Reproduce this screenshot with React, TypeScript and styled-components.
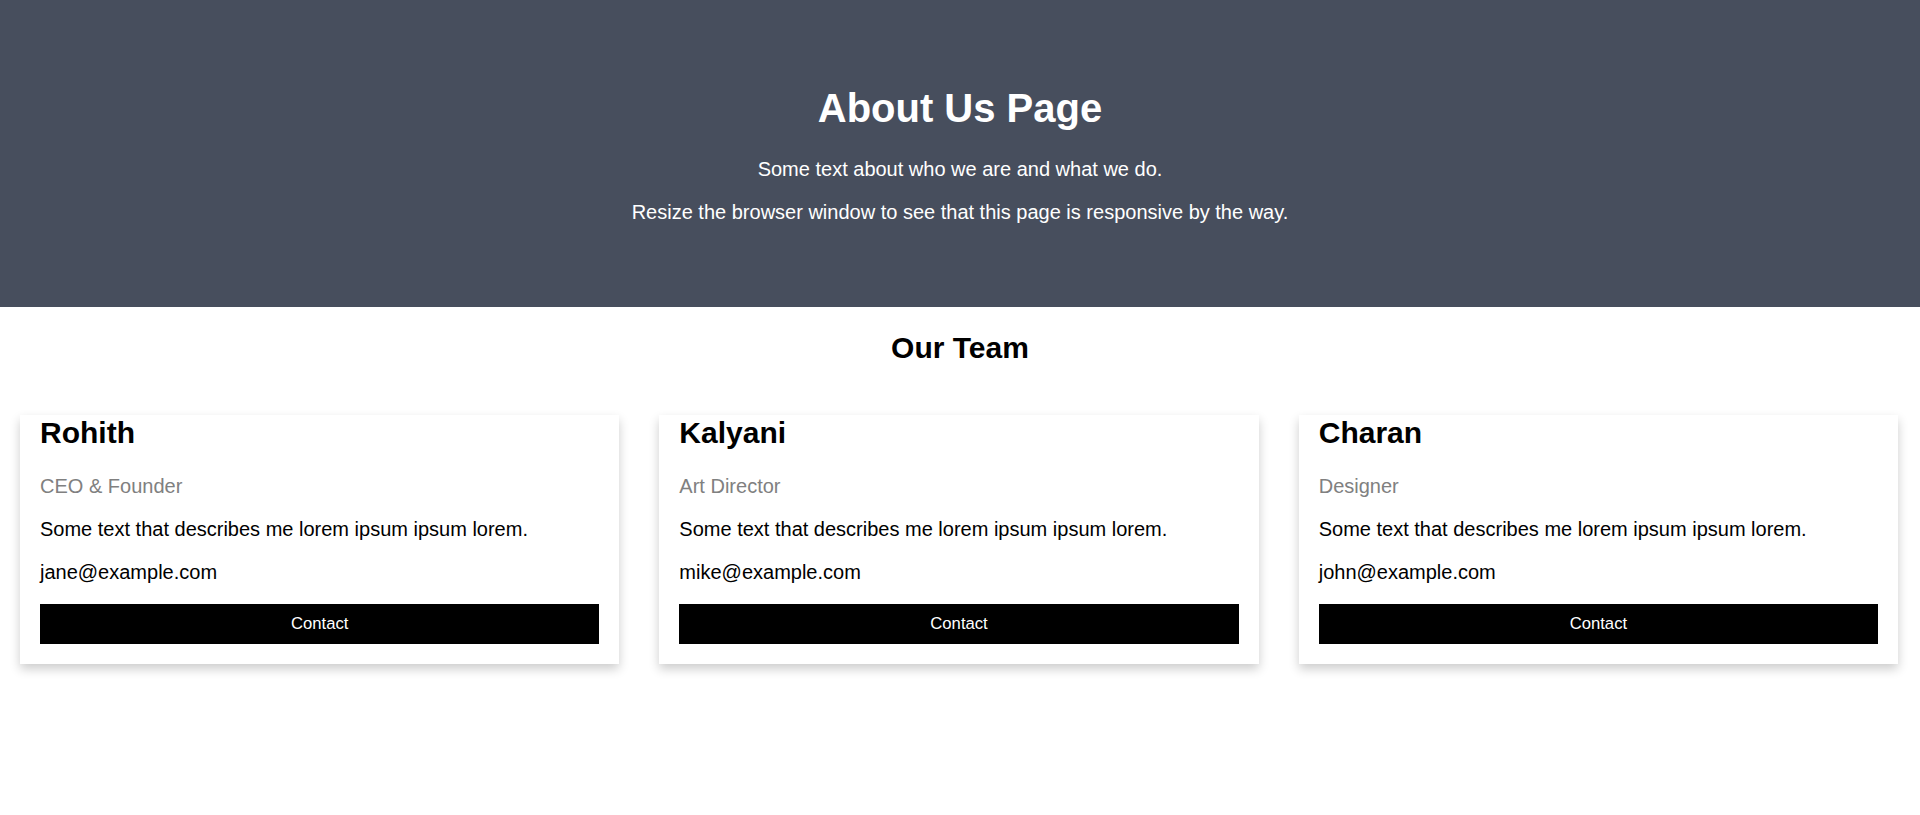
import styled, { createGlobalStyle } from 'styled-components';

// Types
interface Member {
  name: string;
  title: string;
  email: string;
}

const GlobalStyle = createGlobalStyle`
  html, body {
    margin: 0;
    padding: 0;
    background: #fff;
  }

  body {
    font-family: "Liberation Sans", Arial, sans-serif;
    color: #000;
  }

  * {
    box-sizing: border-box;
  }
`;

// Styled Components
const AboutSection = styled.header`
  padding: 85px 62px 83px;
  text-align: center;
  background-color: #474e5d;
  color: #fff;
`;

const PageTitle = styled.h1`
  margin: 0 0 27px;
  font-size: 40px;
  line-height: 46px;
  font-weight: 700;
`;

const Lead = styled.p`
  margin: 0 0 20px;
  font-size: 20px;
  line-height: 23px;

  &:last-child {
    margin-bottom: 0;
  }
`;

const SectionTitle = styled.h2`
  margin: 24px 0 50px;
  text-align: center;
  font-size: 30px;
  line-height: 34px;
  font-weight: 700;
`;

const Row = styled.div`
  display: flex;
  align-items: flex-start;
`;

const Column = styled.div`
  width: 33.3%;
  padding: 0 20px;
  margin-bottom: 20px;
`;

const Card = styled.div`
  background: #fff;
  box-shadow: 0 5px 10px 0 rgba(0, 0, 0, 0.2);
  padding: 0 20px 20px;
`;

const Name = styled.h2`
  margin: 0 0 25px;
  font-size: 30px;
  line-height: 35px;
  font-weight: 700;
`;

const Text = styled.p<{ $muted?: boolean }>`
  margin: 0 0 20px;
  font-size: 20px;
  line-height: 23px;
  color: ${props => (props.$muted ? 'grey' : '#000')};
`;

const ContactButton = styled.button`
  display: block;
  width: 100%;
  height: 40px;
  padding: 10px;
  border: none;
  outline: 0;
  background: #000;
  color: #fff;
  font-family: "Liberation Sans", Arial, sans-serif;
  font-size: 16.67px;
  line-height: 20px;
  text-align: center;
  cursor: pointer;

  &:hover {
    background: #555;
  }
`;

const team: Member[] = [
  { name: 'Rohith', title: 'CEO & Founder', email: 'jane@example.com' },
  { name: 'Kalyani', title: 'Art Director', email: 'mike@example.com' },
  { name: 'Charan', title: 'Designer', email: 'john@example.com' },
];

const App = () => {
  return (
    <>
      <GlobalStyle />
      <AboutSection>
        <PageTitle>About Us Page</PageTitle>
        <Lead>Some text about who we are and what we do.</Lead>
        <Lead>Resize the browser window to see that this page is responsive by the way.</Lead>
      </AboutSection>

      <SectionTitle>Our Team</SectionTitle>
      <Row>
        {team.map(member => (
          <Column key={member.name}>
            <Card>
              <Name>{member.name}</Name>
              <Text $muted>{member.title}</Text>
              <Text>Some text that describes me lorem ipsum ipsum lorem.</Text>
              <Text>{member.email}</Text>
              <ContactButton>Contact</ContactButton>
            </Card>
          </Column>
        ))}
      </Row>
    </>
  );
};

export default App;
